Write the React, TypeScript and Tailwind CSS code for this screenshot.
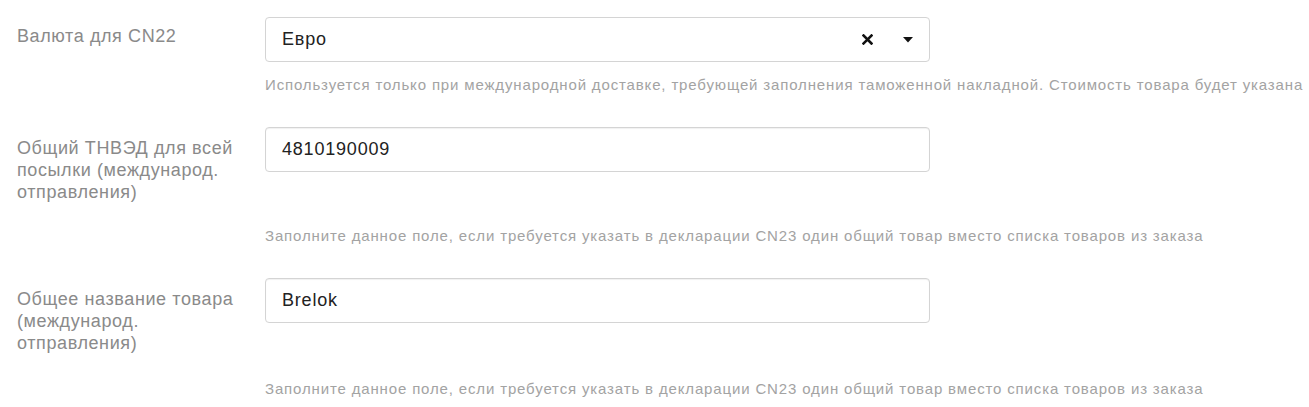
import React from "react";

function Help({ children, mt }: { children: React.ReactNode; mt: string }) {
  return (
    <div className={`pl-[265px] ${mt} text-[15px] leading-[20px] text-[#a3a3a3] tracking-[0.85px] whitespace-nowrap`}>
      {children}
    </div>
  );
}

function Label({ children, pt }: { children: React.ReactNode; pt: string }) {
  return (
    <div className={`w-[265px] shrink-0 pl-[17px] pr-[20px] ${pt} pb-[10px] text-[18px] leading-[22px] text-[#8a8a8a] tracking-[0.6px]`}>
      {children}
    </div>
  );
}

function TextInput({ value }: { value: string }) {
  return (
    <div className="w-[665px] h-[45px] border border-[#d4d4d4] rounded-[4px] bg-white shadow-[inset_0_1px_1px_rgba(0,0,0,0.06)] flex items-center pl-[16px] text-[18px] text-[#222] tracking-[0.8px]">
      {value}
    </div>
  );
}

export default function App() {
  return (
    <div className="w-[1309px] h-[407px] bg-white overflow-hidden font-['Liberation_Sans',Arial,sans-serif] pt-[17px]">
      {/* Row 1 */}
      <div className="flex">
        <Label pt="pt-[8px]">Валюта для CN22</Label>
        <div className="w-[665px] h-[45px] border border-[#d4d4d4] rounded-[4px] bg-white flex items-center pl-[16px] pr-[16px] text-[18px] text-[#222] tracking-[0.8px]">
          <span className="flex-1">Евро</span>
          <svg width="11" height="11" viewBox="0 0 11 11" className="mr-[30px]">
            <path d="M1.5 1.5 L9.5 9.5 M9.5 1.5 L1.5 9.5" stroke="#111" strokeWidth="2.5" strokeLinecap="square" />
          </svg>
          <svg width="10" height="6" viewBox="0 0 10 6">
            <path d="M0 0 L10 0 L5 5.5 Z" fill="#111" />
          </svg>
        </div>
      </div>
      <Help mt="mt-[13px]">
        Используется только при международной доставке, требующей заполнения таможенной накладной. Стоимость товара будет указана
      </Help>

      {/* Row 2 */}
      <div className="flex mt-[32px]">
        <Label pt="pt-[10px]">Общий ТНВЭД для всей посылки (международ. отправления)</Label>
        <TextInput value="4810190009" />
      </div>
      <Help mt="mt-[13px]">
        Заполните данное поле, если требуется указать в декларации CN23 один общий товар вместо списка товаров из заказа
      </Help>

      {/* Row 3 */}
      <div className="flex mt-[32px]">
        <Label pt="pt-[10px]">Общее название товара (международ. отправления)</Label>
        <TextInput value="Brelok" />
      </div>
      <Help mt="mt-[15px]">
        Заполните данное поле, если требуется указать в декларации CN23 один общий товар вместо списка товаров из заказа
      </Help>
    </div>
  );
}
